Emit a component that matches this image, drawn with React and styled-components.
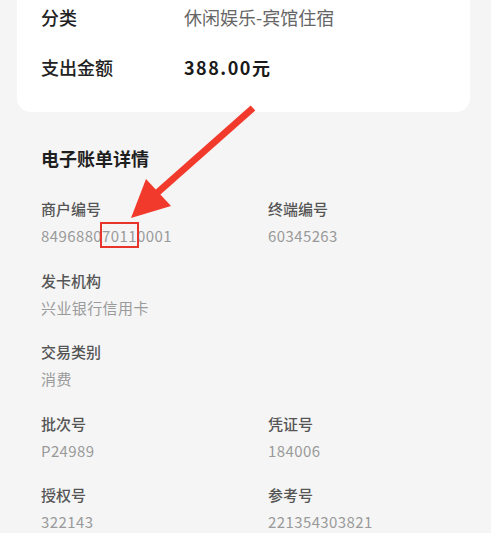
import React from "react";
import styled, { createGlobalStyle } from "styled-components";

const Global = createGlobalStyle`
  html, body { margin: 0; padding: 0; background: #f5f5f5; }
  body { font-family: "Noto Sans CJK SC", "Noto Sans", sans-serif; overflow: hidden; }
`;

const Page = styled.div`
  position: relative;
  width: 491px;
  height: 533px;
  overflow: hidden;
  background: #f5f5f5;
`;

const Card = styled.div`
  margin: 0 21px 0 17px;
  background: #ffffff;
  border-radius: 0 0 14px 14px;
  padding: 0 24px 28px;
  display: flex;
  flex-direction: column;
  gap: 16px;
`;

const CardRow = styled.div`
  display: grid;
  grid-template-columns: 143px 1fr;
  height: 34px;
  align-items: center;
  font-size: 18px;
  line-height: 34px;
`;

const CardLabel = styled.span`
  color: #222;
  font-weight: 500;
`;

const CardValue = styled.span`
  color: ${(p) => (p.$strong ? "#1a1a1a" : "#666")};
  font-weight: ${(p) => (p.$strong ? 700 : 400)};
  letter-spacing: ${(p) => (p.$strong ? "1.5px" : "0")};
`;

const Section = styled.section`
  padding: 33px 0 0 41px;
`;

const Title = styled.h2`
  margin: 0 0 27px;
  font-size: 18px;
  line-height: 26px;
  font-weight: 700;
  color: #1f1f1f;
`;

const Grid = styled.div`
  display: grid;
  grid-template-columns: 227px 1fr;
  row-gap: 22.5px;
`;

const Item = styled.div`
  display: flex;
  flex-direction: column;
  gap: 5px;
  grid-column: ${(p) => (p.$full ? "1 / -1" : "auto")};
`;

const Label = styled.span`
  font-size: 15px;
  line-height: 22px;
  font-weight: 500;
  color: #555;
`;

const Value = styled.span`
  font-size: 15px;
  line-height: 22px;
  color: #9a9a9a;
  letter-spacing: 0.4px;
`;

const Marked = styled.span`
  position: relative;
  &::after {
    content: "";
    position: absolute;
    left: -2px;
    right: -2px;
    top: -3px;
    bottom: -2px;
    border: 2px solid #e8352b;
  }
`;

const Overlay = styled.svg`
  position: absolute;
  left: 0;
  top: 0;
  pointer-events: none;
`;

const items = [
  [{ l: "商户编号", v: "merchant" }, { l: "终端编号", v: "60345263" }],
  [{ l: "发卡机构", v: "兴业银行信用卡", full: true }],
  [{ l: "交易类别", v: "消费", full: true }],
  [{ l: "批次号", v: "P24989" }, { l: "凭证号", v: "184006" }],
  [{ l: "授权号", v: "322143" }, { l: "参考号", v: "221354303821" }],
];

export default function App() {
  return (
    <Page>
      <Global />
      <Card>
        <CardRow>
          <CardLabel>分类</CardLabel>
          <CardValue>休闲娱乐-宾馆住宿</CardValue>
        </CardRow>
        <CardRow>
          <CardLabel>支出金额</CardLabel>
          <CardValue $strong>388.00元</CardValue>
        </CardRow>
      </Card>
      <Section>
        <Title>电子账单详情</Title>
        <Grid>
          {items.flat().map((it) => (
            <Item key={it.l} $full={it.full}>
              <Label>{it.l}</Label>
              <Value>
                {it.v === "merchant" ? (
                  <>
                    8496880<Marked>7011</Marked>0001
                  </>
                ) : (
                  it.v
                )}
              </Value>
            </Item>
          ))}
        </Grid>
      </Section>
      <Overlay width="491" height="533" viewBox="0 0 491 533">
        <line x1="253" y1="108" x2="157" y2="193" stroke="#f23a2c" strokeWidth="7" />
        <polygon points="131,218 146,179 171,206" fill="#f23a2c" />
      </Overlay>
    </Page>
  );
}
